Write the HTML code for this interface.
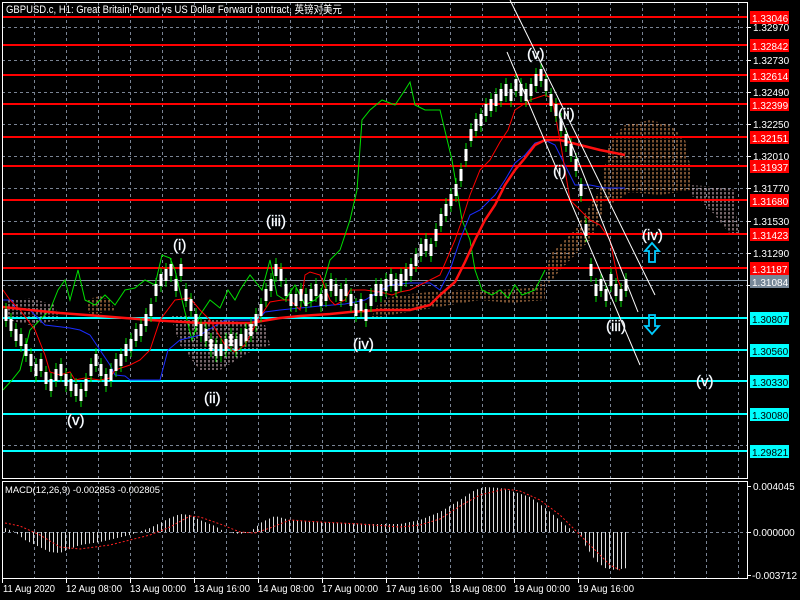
<!DOCTYPE html>
<html><head><meta charset="utf-8"><style>
html,body{margin:0;padding:0;background:#000;width:800px;height:600px;overflow:hidden}
svg{display:block}
text{font-family:"Liberation Sans","Noto Sans CJK SC",sans-serif;font-size:10px;fill:#fff}
.w{font-size:15px;fill:#fff;stroke:#9ab;stroke-width:0.5;paint-order:stroke}
</style></head><body>
<svg width="800" height="600" viewBox="0 0 800 600" xmlns="http://www.w3.org/2000/svg">
<defs>
<pattern id="hatchO" width="4" height="4" patternUnits="userSpaceOnUse"><line x1="1" y1="0" x2="1" y2="2.5" stroke="#f0a060" stroke-width="1"/></pattern>
<pattern id="hatchP" width="4" height="4" patternUnits="userSpaceOnUse"><line x1="1" y1="0" x2="1" y2="2.5" stroke="#e8c8d0" stroke-width="1"/></pattern>
<pattern id="hist" width="4" height="4" patternUnits="userSpaceOnUse"><line x1="1.5" y1="0" x2="1.5" y2="4" stroke="#ddd" stroke-width="1"/></pattern>
<path id="cd" d="M6 303v24M11 313v24M16 323v24M21 328v24M26 338v24M31 348v24M36 358v24M41 353v24M46 366v24M51 373v24M56 363v24M61 358v24M66 368v24M71 373v24M76 378v24M81 383v24M86 373v24M91 358v24M96 348v24M101 358v24M106 368v24M111 363v24M116 353v24M121 348v24M126 338v24M131 333v24M136 323v24M141 318v24M146 308v24M151 298v24M156 278v24M161 268v24M166 263v24M171 258v24M176 273v24M181 258v24M186 283v24M191 293v24M196 308v24M201 318v24M206 323v24M211 333v24M216 338v24M221 338v24M226 333v24M231 328v24M236 333v24M241 328v24M246 323v24M251 318v24M256 308v24M261 298v24M266 283v24M271 273v24M276 258v24M281 263v24M286 278v24M291 288v24M296 288v24M301 283v24M306 288v24M311 283v24M316 278v24M321 288v24M326 283v24M331 273v24M336 278v24M341 283v24M346 278v24M351 288v24M356 298v24M361 293v24M366 303v24M371 288v24M376 278v24M381 278v24M386 273v24M391 268v24M396 273v24M401 268v24M406 263v24M411 258v24M416 248v24M421 238v24M426 233v24M431 238v24M436 223v24M441 208v24M446 198v24M451 188v24M456 178v24M461 163v24M466 143v24M471 123v24M476 113v24M481 108v24M486 98v24M491 93v24M496 88v24M501 83v24M506 78v24M511 83v24M516 73v24M521 78v24M526 83v24M531 78v24M536 68v24M541 63v24M546 73v24M551 88v24M556 98v24M561 113v24M566 128v24M571 138v24M576 153v24M581 178v24M586 218v24M591 258v24M596 278v24M601 273v24M606 283v24M611 268v24M616 278v24M621 283v24M626 273v24"/>
</defs>
<rect width="800" height="600" fill="#000"/>
<g stroke="#7a8494" stroke-dasharray="3 3" stroke-width="1">
<path d="M34.5 2V478M66.5 2V478M98.5 2V478M130.5 2V478M162.5 2V478M194.5 2V478M226.5 2V478M258.5 2V478M290.5 2V478M322.5 2V478M354.5 2V478M386.5 2V478M418.5 2V478M450.5 2V478M482.5 2V478M514.5 2V478M546.5 2V478M578.5 2V478M610.5 2V478M642.5 2V478M674.5 2V478M706.5 2V478M738.5 2V478"/>
<path d="M34.5 481V579M66.5 481V579M98.5 481V579M130.5 481V579M162.5 481V579M194.5 481V579M226.5 481V579M258.5 481V579M290.5 481V579M322.5 481V579M354.5 481V579M386.5 481V579M418.5 481V579M450.5 481V579M482.5 481V579M514.5 481V579M546.5 481V579M578.5 481V579M610.5 481V579M642.5 481V579M674.5 481V579M706.5 481V579M738.5 481V579"/>
<path d="M2 27.5H747M2 60.5H747M2 92.5H747M2 124.5H747M2 156.5H747M2 188.5H747M2 221.5H747M2 253.5H747M2 285.5H747M2 317.5H747M2 349.5H747M2 381.5H747M2 413.5H747M2 445.5H747"/>
<path d="M2 532.5H747"/>
</g>
<path d="M8 300 L30 298 L55 305 L60 320 L30 325 L8 320Z" fill="url(#hatchP)"/>
<path d="M85 300 L100 296 L110 300 L115 310 L90 315Z" fill="url(#hatchO)"/>
<path d="M170 315 L210 318 L240 322 L265 325 L270 345 L250 352 L220 370 L200 370 L180 345Z" fill="url(#hatchP)"/>
<path d="M380 300 L400 295 L430 292 L460 290 L500 290 L530 288 L545 280 L545 300 L510 303 L480 300 L450 305 L420 310 L390 315 L370 320Z" fill="url(#hatchO)"/>
<path d="M545 280 L550 255 L565 240 L575 230 L590 205 L600 190 L605 200 L600 220 L590 240 L575 255 L560 270 L548 285Z" fill="url(#hatchO)"/>
<path d="M600 190 L610 140 L625 125 L650 120 L670 125 L685 140 L690 165 L690 190 L660 195 L630 192 L610 205Z" fill="url(#hatchO)"/>
<path d="M690 185 L720 187 L735 190 L738 235 L728 232 L715 215 L700 200 L690 195Z" fill="url(#hatchP)"/>
<g stroke="#ff0000" stroke-width="2">
<path d="M2 17H747M2 45H747M2 75H747M2 104H747M2 137H747M2 166H747M2 200H747M2 234H747M2 268H747"/>
</g>
<path d="M2 280.5H747" stroke="#8899a8" stroke-width="1"/>
<g stroke="#00ffff" stroke-width="2">
<path d="M2 318H747M2 350H747M2 381H747M2 414H747M2 451H747"/>
</g>
<polyline fill="none" stroke="#00e000" stroke-width="1" points="3,390 12,380 20,370 30,330 40,320 50,310 58,290 65,280 70,300 78,270 85,300 95,305 105,295 115,305 125,290 135,288 145,280 155,285 162,255 170,258 175,270 182,300 192,340 200,315 210,300 220,308 228,290 235,300 240,290 250,275 262,290 270,260 277,295 285,300 295,285 305,305 315,300 320,295 330,260 340,250 350,220 357,190 362,120 370,110 382,100 395,105 405,90 410,82 415,105 425,110 440,110 452,160 462,220 470,240 475,270 482,290 492,295 500,290 508,298 515,285 522,295 535,290 545,270"/>
<polyline fill="none" stroke="#1a2cff" stroke-width="1" points="3,300 12,300 15,308 30,310 45,325 70,328 80,330 90,335 100,350 110,365 115,375 125,376 130,380 160,380 168,350 180,340 200,335 225,320 250,320 258,320 265,312 280,310 300,308 320,306 345,304 365,300 390,285 410,283 430,283 440,290 450,270 460,240 470,215 480,210 495,195 505,180 515,163 525,155 535,143 545,140 555,145 565,165 575,185 590,185 605,188 625,188"/>
<polyline fill="none" stroke="#ff0000" stroke-width="1" points="3,290 10,300 20,310 35,330 45,355 50,372 60,375 70,372 75,380 85,378 100,380 110,378 115,370 130,365 140,360 150,350 160,320 175,300 190,298 200,310 210,320 225,345 235,352 245,345 258,320 270,302 282,300 290,300 300,310 305,275 310,272 320,275 330,300 335,305 345,300 350,290 365,290 380,292 392,295 400,292 410,290 420,285 440,275 455,240 462,220 470,195 480,170 490,160 500,142 508,130 515,110 530,100 545,95 552,98 560,140 570,200 580,210 590,220 600,225 610,240 618,280 622,290"/>
<polyline fill="none" stroke="#ff1010" stroke-width="2.5" points="3,307 30,310 60,313 100,316 150,320 200,323 250,323 280,318 300,316 330,314 350,312 380,310 410,310 430,305 440,295 455,282 465,262 475,240 485,220 495,205 505,185 515,170 525,158 535,145 545,140 560,140 580,145 600,150 625,155"/>
<g fill="none" stroke="#00dd00" stroke-width="1"><use href="#cd"/></g>
<g fill="none" stroke="#ffffff" stroke-width="3" stroke-dasharray="0 6 12 6"><use href="#cd"/></g>
<g stroke="#fff" stroke-width="1">
<line x1="510" y1="0" x2="655" y2="295"/>
<line x1="507" y1="52" x2="640" y2="365"/>
<line x1="560" y1="115" x2="638" y2="312"/>
</g>
<g>
<text class="w" x="527" y="59">(v)</text>
<text class="w" x="558" y="119">(ii)</text>
<text class="w" x="553" y="176">(i)</text>
<text class="w" x="642" y="240">(iv)</text>
<text class="w" x="606" y="331">(iii)</text>
<text class="w" x="696" y="386">(v)</text>
<text class="w" x="173" y="250">(i)</text>
<text class="w" x="266" y="226">(iii)</text>
<text class="w" x="204" y="403">(ii)</text>
<text class="w" x="353" y="349">(iv)</text>
<text class="w" x="67" y="425">(v)</text>
</g>
<path d="M652 243 L659 251 L655 251 L655 262 L649 262 L649 251 L645 251Z" fill="none" stroke="#00ccff" stroke-width="1.8"/>
<path d="M652 334 L659 326 L655 326 L655 315 L649 315 L649 326 L645 326Z" fill="none" stroke="#00ccff" stroke-width="1.8"/>
<path d="M5 532 L5 528 L15 532 L25 540 L50 552 L60 553 L80 545 L100 542 L130 535 L150 528 L170 518 L180 514 L190 515 L200 520 L215 526 L225 532 L240 534 L250 532 L262 522 L275 516 L290 520 L310 522 L340 523 L370 524 L400 524 L420 520 L440 512 L460 500 L475 490 L485 487 L500 488 L515 492 L530 497 L548 510 L565 525 L575 532Z" fill="url(#hist)"/>
<path d="M580 532 L585 545 L595 560 L605 568 L615 570 L627 568 L627 532Z" fill="url(#hist)"/>
<polyline fill="none" stroke="#ff2020" stroke-width="1" stroke-dasharray="2 2" points="5,523 20,526 40,535 60,547 80,549 110,545 130,540 150,535 170,527 190,516 200,517 220,524 240,532 255,533 270,528 290,520 320,522 360,524 400,527 420,525 440,519 460,506 480,495 505,489 520,491 540,500 560,515 575,530 590,545 610,565 620,570"/>
<rect x="2.5" y="2.5" width="745" height="476" fill="none" stroke="#fff" stroke-width="1"/>
<rect x="2.5" y="481.5" width="745" height="97" fill="none" stroke="#fff" stroke-width="1"/>
<text x="6" y="13" style="font-size:11px" textLength="336" lengthAdjust="spacingAndGlyphs">GBPUSD.c, H1:  Great Britain Pound vs US Dollar Forward contract, 英镑对美元</text>
<text x="5" y="493" style="font-size:9.5px" textLength="155" lengthAdjust="spacingAndGlyphs">MACD(12,26,9) -0.002853 -0.002805</text>
<g stroke="#fff"><path d="M747 27.5h4M747 60.5h4M747 92.5h4M747 124.5h4M747 156.5h4M747 188.5h4M747 221.5h4M747 253.5h4M747 285.5h4M747 486.5h4M747 532.5h4M747 575.5h4"/></g>
<g style="font-size:10.5px">
<text x="753" y="31">1.32970</text><text x="753" y="64">1.32730</text><text x="753" y="96">1.32490</text>
<text x="753" y="128">1.32250</text><text x="753" y="160">1.32010</text><text x="753" y="192">1.31770</text>
<text x="753" y="225">1.31530</text><text x="753" y="257">1.31290</text>
<text x="753" y="490">0.004045</text><text x="753" y="536">0.000000</text><text x="752" y="579">-0.003712</text>
</g>
<g>
<rect x="750" y="11" width="39" height="13" fill="#ff0000"/><rect x="750" y="39" width="39" height="13" fill="#ff0000"/>
<rect x="750" y="69" width="39" height="13" fill="#ff0000"/><rect x="750" y="98" width="39" height="13" fill="#ff0000"/>
<rect x="750" y="131" width="39" height="13" fill="#ff0000"/><rect x="750" y="160" width="39" height="13" fill="#ff0000"/>
<rect x="750" y="194" width="39" height="13" fill="#ff0000"/><rect x="750" y="228" width="39" height="13" fill="#ff0000"/>
<rect x="750" y="262" width="39" height="13" fill="#ff0000"/><rect x="750" y="275" width="39" height="13" fill="#778899"/>
<rect x="750" y="312" width="39" height="13" fill="#00ffff"/><rect x="750" y="344" width="39" height="13" fill="#00ffff"/>
<rect x="750" y="375" width="39" height="13" fill="#00ffff"/><rect x="750" y="408" width="39" height="13" fill="#00ffff"/>
<rect x="750" y="445" width="39" height="13" fill="#00ffff"/>
</g>
<g style="font-size:10.5px">
<text x="752" y="22">1.33046</text><text x="752" y="50">1.32842</text><text x="752" y="80">1.32614</text>
<text x="752" y="109">1.32399</text><text x="752" y="142">1.32151</text><text x="752" y="171">1.31937</text>
<text x="752" y="205">1.31680</text><text x="752" y="239">1.31423</text><text x="752" y="273">1.31187</text>
<text x="752" y="286">1.31084</text>
<text x="752" y="323" style="fill:#000">1.30807</text><text x="752" y="355" style="fill:#000">1.30560</text>
<text x="752" y="386" style="fill:#000">1.30330</text><text x="752" y="419" style="fill:#000">1.30080</text>
<text x="752" y="456" style="fill:#000">1.29821</text>
</g>
<g stroke="#fff"><path d="M2.5 579v4M66.5 579v4M130.5 579v4M194.5 579v4M258.5 579v4M322.5 579v4M386.5 579v4M450.5 579v4M514.5 579v4M578.5 579v4"/></g>
<g style="font-size:10.5px">
<text x="3" y="592" textLength="52" lengthAdjust="spacingAndGlyphs">11 Aug 2020</text>
<text x="66" y="592" textLength="56" lengthAdjust="spacingAndGlyphs">12 Aug 08:00</text>
<text x="130" y="592" textLength="56" lengthAdjust="spacingAndGlyphs">13 Aug 00:00</text>
<text x="194" y="592" textLength="56" lengthAdjust="spacingAndGlyphs">13 Aug 16:00</text>
<text x="258" y="592" textLength="56" lengthAdjust="spacingAndGlyphs">14 Aug 08:00</text>
<text x="322" y="592" textLength="56" lengthAdjust="spacingAndGlyphs">17 Aug 00:00</text>
<text x="386" y="592" textLength="56" lengthAdjust="spacingAndGlyphs">17 Aug 16:00</text>
<text x="450" y="592" textLength="56" lengthAdjust="spacingAndGlyphs">18 Aug 08:00</text>
<text x="514" y="592" textLength="56" lengthAdjust="spacingAndGlyphs">19 Aug 00:00</text>
<text x="578" y="592" textLength="56" lengthAdjust="spacingAndGlyphs">19 Aug 16:00</text>
</g>
</svg>
</body></html>
